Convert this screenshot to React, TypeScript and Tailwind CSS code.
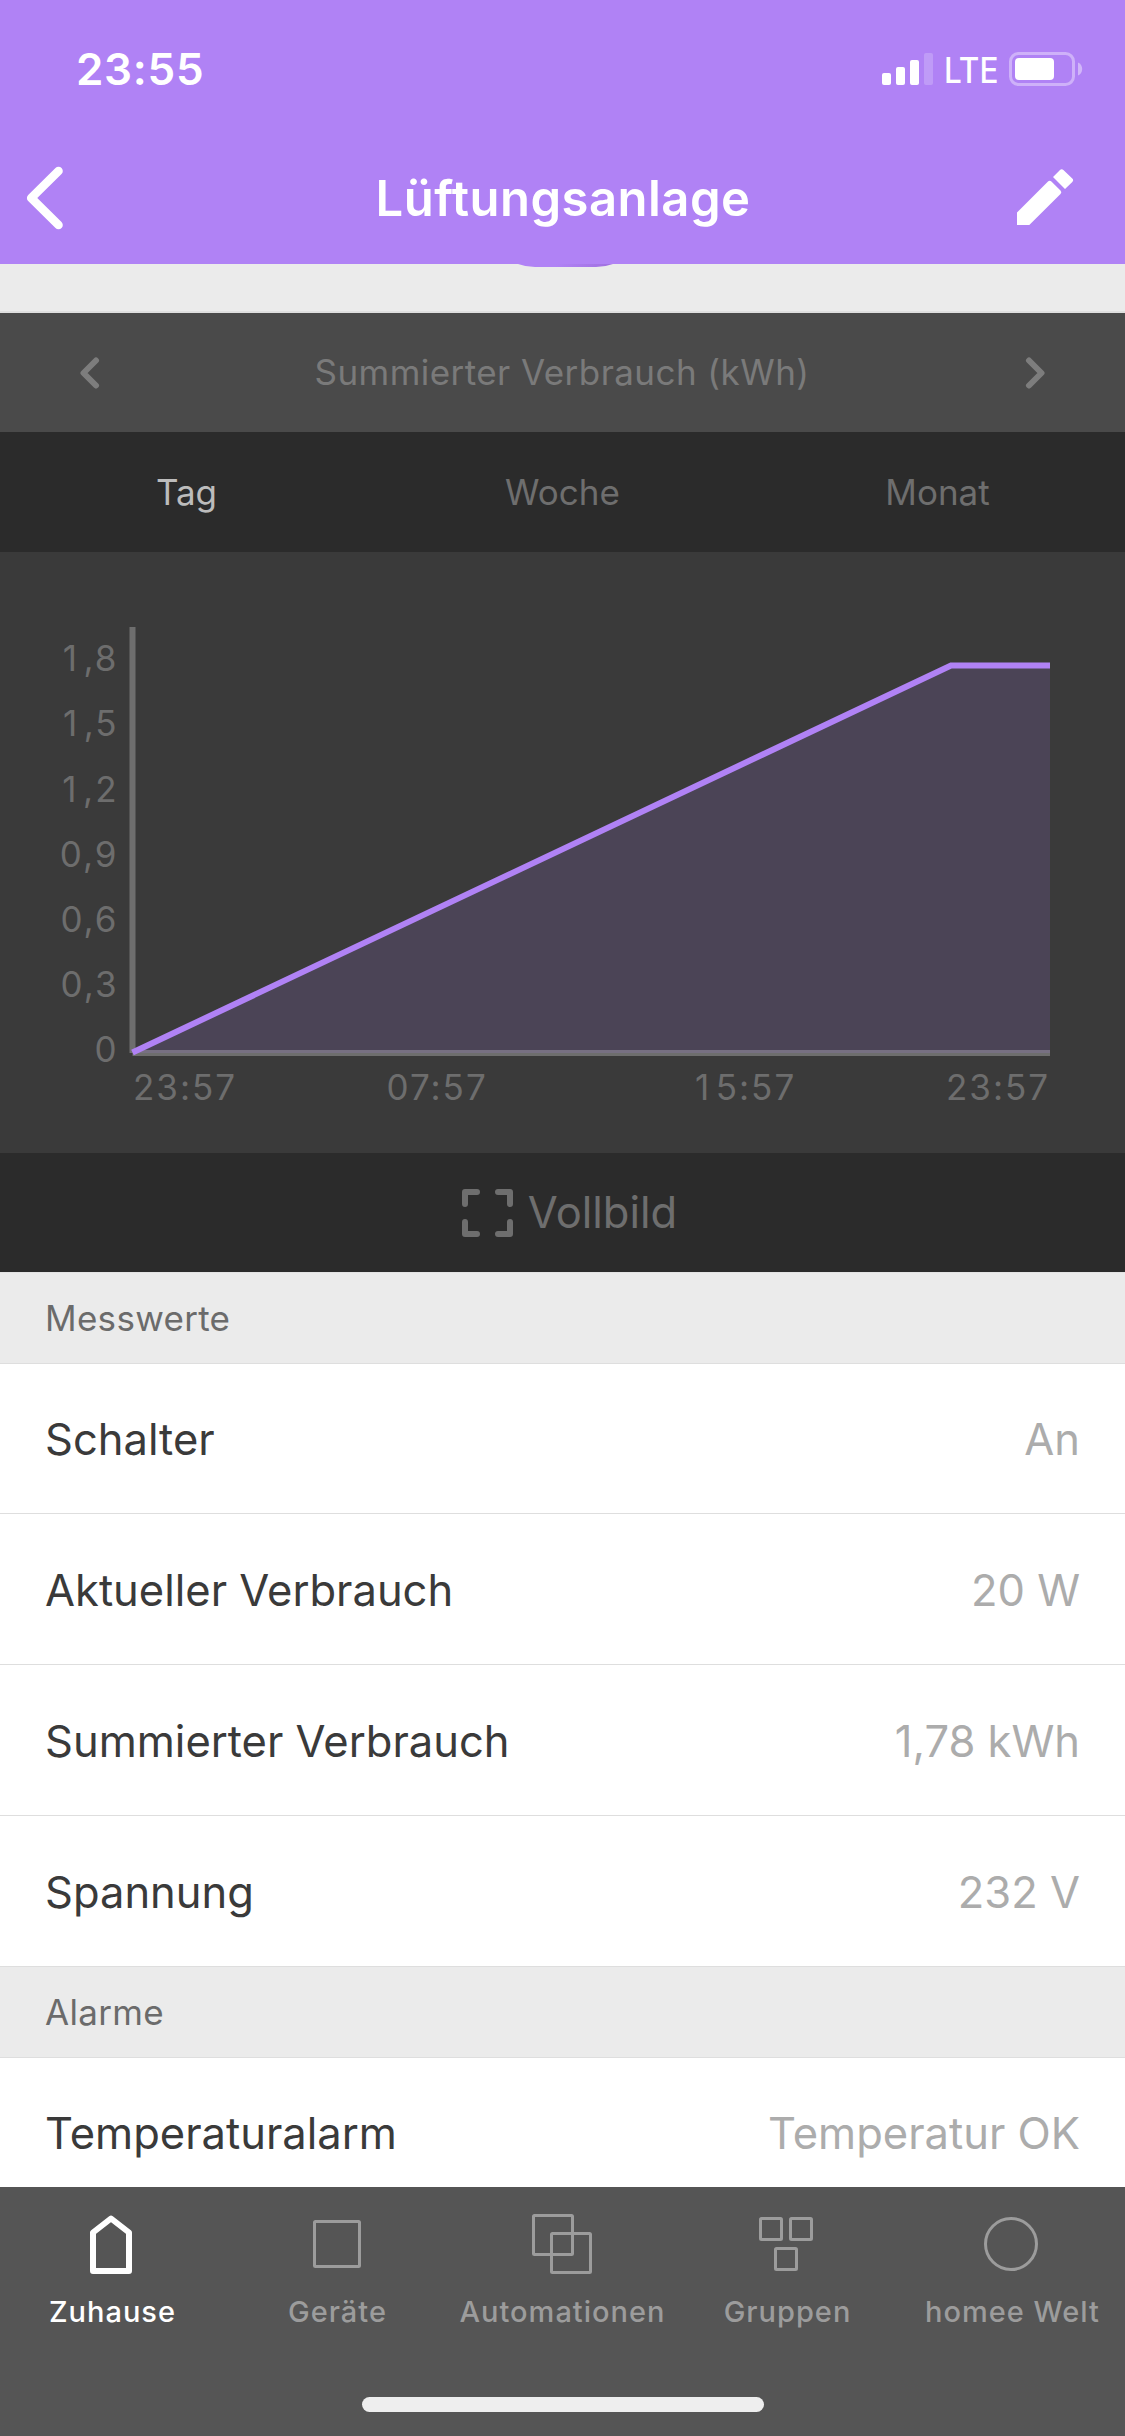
import type { ReactNode } from "react";
import clsx from "clsx";

interface Reading {
  label: string;
  value: string;
}

const readings: Reading[] = [
  { label: "Schalter", value: "An" },
  { label: "Aktueller Verbrauch", value: "20 W" },
  { label: "Summierter Verbrauch", value: "1,78 kWh" },
  { label: "Spannung", value: "232 V" },
];

const alarms: Reading[] = [{ label: "Temperaturalarm", value: "Temperatur OK" }];

const ranges = ["Tag", "Woche", "Monat"];

const yTicks = [
  { label: "1,8", y: 119.2 },
  { label: "1,5", y: 184.3 },
  { label: "1,2", y: 249.5 },
  { label: "0,9", y: 314.5 },
  { label: "0,6", y: 379.5 },
  { label: "0,3", y: 444.5 },
  { label: "0", y: 509.5 },
];

const xTicks = [
  { label: "23:57", x: 133 },
  { label: "07:57", x: 386.5 },
  { label: "15:57", x: 695 },
  { label: "23:57", x: 946 },
];

function StatusBar() {
  return (
    <div className="flex h-[132px] items-center justify-between pt-[6px] pr-[42px] pl-[76px]">
      <span className="text-[44px] leading-none font-semibold tracking-[0.7px]">23:55</span>
      <div className="flex items-center">
        <svg className="h-[34px] w-[52px]" viewBox="0 0 52 34" fill="currentColor">
          <rect x="1" y="21" width="9" height="12" rx="2" />
          <rect x="15" y="15" width="9" height="18" rx="2" />
          <rect x="29" y="8" width="9" height="25" rx="2" />
          <rect x="43" y="1" width="9" height="32" rx="2" opacity="0.2" />
        </svg>
        <span className="ml-[11px] w-[54px] origin-left scale-x-[0.9] pt-[2px] text-[35px] leading-none font-medium">
          LTE
        </span>
        <svg className="ml-[11px] h-[34px] w-[74px]" viewBox="0 0 74 34">
          <rect
            x="1.5"
            y="1.5"
            width="63"
            height="31"
            rx="8"
            fill="none"
            stroke="white"
            strokeWidth="3"
            opacity="0.38"
          />
          <rect x="6" y="6" width="39" height="22" rx="4" fill="white" />
          <path d="M69 10.5c2.6 1 4.2 3.7 4.2 6.5s-1.6 5.5-4.2 6.5z" fill="white" opacity="0.42" />
        </svg>
      </div>
    </div>
  );
}

function NavBar() {
  return (
    <div className="flex h-[132px] items-center justify-between pr-[51px] pl-[26px]">
      <svg className="mr-[45px] h-[64px] w-[38px]" viewBox="0 0 38 64" fill="none">
        <path
          d="M32.5 5 5.2 32l27.3 27"
          stroke="currentColor"
          strokeWidth="8.6"
          strokeLinecap="round"
          strokeLinejoin="round"
        />
      </svg>
      <h1 className="text-[49px] leading-none font-semibold tracking-[0.46px]">Lüftungsanlage</h1>
      <svg className="mb-[3px] h-[56px] w-[57px]" viewBox="0 0 57 56" fill="currentColor">
        <path d="M0 43.5 31 12.5q1.700-1.700 3.400 0l9.100 9q1.700 1.700 0 3.400L12.300 56H0z" />
        <path d="M36 8l7-7q1.700-1.700 3.400 0l8.900 8.500q1.700 1.700 0 3.400L48 20z" />
      </svg>
    </div>
  );
}

function Chevron({ flip = false }: { flip?: boolean }) {
  return (
    <svg className={clsx("h-[32px] w-[20px]", flip && "-scale-x-100")} viewBox="0 0 20 32" fill="none">
      <path
        d="M16 3.5 3.5 16 16 28.5"
        stroke="#7d7d7d"
        strokeWidth="6"
        strokeLinecap="round"
        strokeLinejoin="round"
      />
    </svg>
  );
}

function TickLabel({ label, x, y, anchor }: { label: string; x: number; y: number; anchor: "start" | "end" }) {
  // a leading 1 is narrow, widen the gap after it so it lines up with the other digits
  return (
    <text x={x} y={y} textAnchor={anchor} dx={label.startsWith("1") ? "0 4.5" : undefined}>
      {label}
    </text>
  );
}

function ConsumptionChart() {
  return (
    <svg className="block h-[601px] w-full bg-[#3a3a3a]" viewBox="0 0 1125 601">
      <g className="text-[35px] tracking-[2px]" fill="#6d6d6d">
        {yTicks.map((tick) => (
          <TickLabel key={tick.label} label={tick.label} x={118.5} y={tick.y} anchor="end" />
        ))}
        {xTicks.map((tick) => (
          <TickLabel key={tick.x} label={tick.label} x={tick.x} y={548} anchor="start" />
        ))}
      </g>
      <rect x="129.5" y="75" width="6" height="426" fill="#6e6e6e" />
      <rect x="132.5" y="498" width="917.5" height="6" fill="#6e6e6e" />
      <path d="M132.5 501 951 113.5h99V501z" fill="#b082f5" fillOpacity="0.15" />
      <path d="M132.5 500.5 951 113.5h99" fill="none" stroke="#b082f5" strokeWidth="6" />
    </svg>
  );
}

function SectionHeader({ children }: { children: ReactNode }) {
  return (
    <h2 className="flex h-[91px] items-center border-b border-[#dedede] bg-[#ebebeb] px-[45px] pt-[1px] text-[35px] tracking-[0.3px] text-[#6b6b6b]">
      {children}
    </h2>
  );
}

function ReadingRow({ label, value }: Reading) {
  return (
    <li className="flex h-[151px] items-center justify-between border-b border-[#dedede] px-[45px] pt-[3px] text-[43.5px] first:h-[150px]">
      <span className="text-[#3a3a3a]">{label}</span>
      <span className="text-[#acacac]">{value}</span>
    </li>
  );
}

const tabs = [
  {
    label: "Zuhause",
    active: true,
    icon: <path d="M32 7.5 50 21.5V60H14V21.5z" strokeWidth="6" />,
  },
  { label: "Geräte", icon: <rect x="10.5" y="10.5" width="45" height="45" rx="1" /> },
  {
    label: "Automationen",
    icon: (
      <>
        <rect x="4.5" y="4.5" width="39" height="39" rx="1" />
        <rect x="22.5" y="22.5" width="39" height="39" rx="1" />
      </>
    ),
  },
  {
    label: "Gruppen",
    icon: (
      <>
        <rect x="6.5" y="7.5" width="21" height="21" rx="1" />
        <rect x="36.5" y="7.5" width="21" height="21" rx="1" />
        <rect x="21.5" y="37.5" width="21" height="21" rx="1" />
      </>
    ),
  },
  { label: "homee Welt", icon: <circle cx="32" cy="33" r="25.5" /> },
];

function TabBar() {
  return (
    <nav className="flex h-[249px] shrink-0 flex-col items-center bg-[#555555] pt-[24px]">
      <div className="grid w-full grid-cols-5">
        {tabs.map((tab) => (
          <div
            key={tab.label}
            className={clsx("flex flex-col items-center", tab.active ? "text-white" : "text-[#9c9c9c]")}
          >
            <svg
              className="h-[66px] w-[67px]"
              viewBox="0 0 67 66"
              fill="none"
              stroke="currentColor"
              strokeWidth="3"
              strokeLinejoin="round"
            >
              {tab.icon}
            </svg>
            <span className="mt-[15px] text-[29px] leading-[40px] font-medium tracking-[1px] whitespace-nowrap">
              {tab.label}
            </span>
          </div>
        ))}
      </div>
      <div className="mt-[65px] h-[15px] w-[402px] rounded-full bg-[#eeeeee]" />
    </nav>
  );
}

export default function App() {
  return (
    <div className="flex h-[2436px] w-[1125px] flex-col overflow-hidden bg-white font-['Inter',sans-serif]">
      <header className="h-[264px] shrink-0 bg-[#b082f5] text-white">
        <StatusBar />
        <NavBar />
      </header>

      <main className="h-[1923px] shrink-0 overflow-hidden">
        <div className="flex h-[49px] justify-center border-b-2 border-[#dfdfdf] bg-[#ebebeb] pl-[6px]">
          {/* bottom edge of the switch that is scrolled under the header */}
          <svg className="h-[3px] w-[95px]" viewBox="0 0 95 3">
            <defs>
              <linearGradient id="switch-edge">
                <stop offset="0.4" stopColor="#b082f5" />
                <stop offset="1" stopColor="#a070e0" />
              </linearGradient>
            </defs>
            <path d="M0 0q8 3 17 3h61q9 0 17-3z" fill="url(#switch-edge)" />
          </svg>
        </div>

        <section>
          <div className="flex h-[119px] items-center justify-between bg-[#4a4a4a] px-[80px]">
            <Chevron />
            <span className="pr-[1px] text-[35px] tracking-[0.44px] text-[#7a7a7a]">Summierter Verbrauch (kWh)</span>
            <Chevron flip />
          </div>
          <div className="grid h-[120px] grid-cols-3 items-center bg-[#2b2b2b] text-center text-[35px]">
            {ranges.map((range, i) => (
              <span key={range} className={i === 0 ? "pr-[2px] text-[#bcbcbc]" : "text-[#6e6e6e]"}>
                {range}
              </span>
            ))}
          </div>
          <ConsumptionChart />
          <div className="flex h-[119px] items-center justify-center gap-[15px] bg-[#2b2b2b] pt-[1px] pl-[14px] text-[#6e6e6e]">
            <svg
              className="h-[48px] w-[51px]"
              viewBox="0 0 51 48"
              fill="none"
              stroke="currentColor"
              strokeWidth="6"
              strokeLinecap="round"
              strokeLinejoin="round"
            >
              <path d="M3 15V3h12M36 3h12v12M48 33v12H36M15 45H3V33" />
            </svg>
            <span className="text-[43.5px]">Vollbild</span>
          </div>
        </section>

        <div className="border-t border-[#e3e3e3]">
          <SectionHeader>Messwerte</SectionHeader>
          <ul>
            {readings.map((reading) => (
              <ReadingRow key={reading.label} {...reading} />
            ))}
          </ul>
        </div>

        <SectionHeader>Alarme</SectionHeader>
        <ul>
          {alarms.map((alarm) => (
            <ReadingRow key={alarm.label} {...alarm} />
          ))}
        </ul>
      </main>

      <TabBar />
    </div>
  );
}
